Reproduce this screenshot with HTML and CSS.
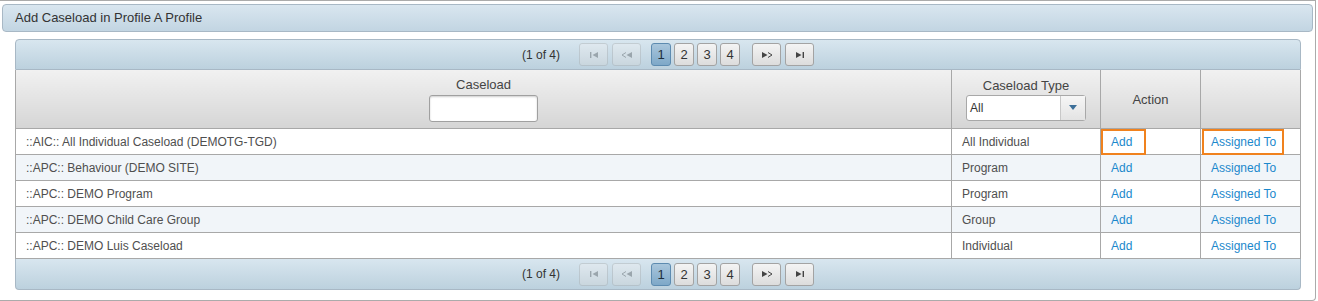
FILE: index.html
```html
<!DOCTYPE html>
<html lang="en">
<head>
    <meta charset="UTF-8">
    <meta name="viewport" content="width=device-width, initial-scale=1.0">
    <title>Add Caseload in Profile</title>
    <link rel="stylesheet" href="styles.css">
</head>
<body>

    <div class="panel">
        <div class="panel-title">Add Caseload in Profile A Profile</div>

        <div class="datatable">
            <div class="paginator paginator-top">
                <span class="page-info">(1 of 4)</span>
                <span class="pg-btn pg-icon disabled">
                    <svg width="10" height="6" viewBox="0 0 10 6"><rect x="1" y="0" width="1.4" height="6" fill="#444"/><path d="M9 0 L3.5 3 L9 6 Z" fill="#444"/></svg>
                </span>
                <span class="pg-btn pg-icon disabled">
                    <svg width="12" height="6" viewBox="0 0 12 6"><path d="M5 0.5 L1 3 L5 5.5" stroke="#444" stroke-width="1" fill="none"/><path d="M11 0 L5.5 3 L11 6 Z" fill="#444"/></svg>
                </span>
                <span class="pages">
                    <span class="pg-btn pg-num active">1</span>
                    <span class="pg-btn pg-num">2</span>
                    <span class="pg-btn pg-num">3</span>
                    <span class="pg-btn pg-num">4</span>
                </span>
                <span class="pg-btn pg-icon">
                    <svg width="12" height="6" viewBox="0 0 12 6"><path d="M1 0 L6.5 3 L1 6 Z" fill="#444"/><path d="M7 0.5 L11 3 L7 5.5" stroke="#444" stroke-width="1" fill="none"/></svg>
                </span>
                <span class="pg-btn pg-icon">
                    <svg width="10" height="6" viewBox="0 0 10 6"><path d="M1 0 L6.5 3 L1 6 Z" fill="#444"/><rect x="7.6" y="0" width="1.4" height="6" fill="#444"/></svg>
                </span>
            </div>

            <table class="grid">
                <colgroup>
                    <col>
                    <col class="col-type">
                    <col class="col-action">
                    <col class="col-assign">
                </colgroup>
                <thead>
                    <tr>
                        <th>
                            <div class="th-label">Caseload</div>
                            <input type="text" class="filter-input">
                        </th>
                        <th>
                            <div class="th-label">Caseload Type</div>
                            <div class="filter-select">
                                <span class="select-label">All</span>
                                <span class="select-trigger">
                                    <svg width="8" height="5" viewBox="0 0 8 5"><path d="M0 0 L8 0 L4 5 Z" fill="#3c6f99"/></svg>
                                </span>
                            </div>
                        </th>
                        <th>Action</th>
                        <th></th>
                    </tr>
                </thead>
                <tbody>
                    <tr>
                        <td>::AIC:: All Individual Caseload (DEMOTG-TGD)</td>
                        <td>All Individual</td>
                        <td class="marked"><a href="#">Add</a></td>
                        <td class="marked"><a href="#">Assigned To</a></td>
                    </tr>
                    <tr class="odd">
                        <td>::APC:: Behaviour (DEMO SITE)</td>
                        <td>Program</td>
                        <td><a href="#">Add</a></td>
                        <td><a href="#">Assigned To</a></td>
                    </tr>
                    <tr>
                        <td>::APC:: DEMO Program</td>
                        <td>Program</td>
                        <td><a href="#">Add</a></td>
                        <td><a href="#">Assigned To</a></td>
                    </tr>
                    <tr class="odd">
                        <td>::APC:: DEMO Child Care Group</td>
                        <td>Group</td>
                        <td><a href="#">Add</a></td>
                        <td><a href="#">Assigned To</a></td>
                    </tr>
                    <tr>
                        <td>::APC:: DEMO Luis Caseload</td>
                        <td>Individual</td>
                        <td><a href="#">Add</a></td>
                        <td><a href="#">Assigned To</a></td>
                    </tr>
                </tbody>
            </table>

            <div class="paginator paginator-bottom">
                <span class="page-info">(1 of 4)</span>
                <span class="pg-btn pg-icon disabled">
                    <svg width="10" height="6" viewBox="0 0 10 6"><rect x="1" y="0" width="1.4" height="6" fill="#444"/><path d="M9 0 L3.5 3 L9 6 Z" fill="#444"/></svg>
                </span>
                <span class="pg-btn pg-icon disabled">
                    <svg width="12" height="6" viewBox="0 0 12 6"><path d="M5 0.5 L1 3 L5 5.5" stroke="#444" stroke-width="1" fill="none"/><path d="M11 0 L5.5 3 L11 6 Z" fill="#444"/></svg>
                </span>
                <span class="pages">
                    <span class="pg-btn pg-num active">1</span>
                    <span class="pg-btn pg-num">2</span>
                    <span class="pg-btn pg-num">3</span>
                    <span class="pg-btn pg-num">4</span>
                </span>
                <span class="pg-btn pg-icon">
                    <svg width="12" height="6" viewBox="0 0 12 6"><path d="M1 0 L6.5 3 L1 6 Z" fill="#444"/><path d="M7 0.5 L11 3 L7 5.5" stroke="#444" stroke-width="1" fill="none"/></svg>
                </span>
                <span class="pg-btn pg-icon">
                    <svg width="10" height="6" viewBox="0 0 10 6"><path d="M1 0 L6.5 3 L1 6 Z" fill="#444"/><rect x="7.6" y="0" width="1.4" height="6" fill="#444"/></svg>
                </span>
            </div>
        </div>
    </div>

</body>
</html>
```

FILE: styles.css
```css
body{
    margin:0;
    font-family:"Liberation Sans", Arial, sans-serif;
    font-size:12px;
    color:#4f4f4f;
    background-color:#fff;
}

.panel{
    width:1316px;
    height:301px;
    border:1px solid #ababab;
    border-left:none;
    border-radius:0 0 4px 0;
    padding:3px 2px 0 2px;
    box-sizing:border-box;
}

.panel-title{
    height:28px;
    line-height:26px;
    box-sizing:border-box;
    border:1px solid #a8b8c5;
    border-radius:4px;
    background:linear-gradient(#d9e6ef, #c2d5e2);
    padding-left:12px;
    color:#333;
    font-size:13px;
}

.datatable{
    margin:7px 0 0 13px;
    width:1286px;
}

/* paginator bars */
.paginator{
    height:31px;
    box-sizing:border-box;
    border:1px solid #a8b8c5;
    background:linear-gradient(#d8e6ef, #bcd1de);
    display:flex;
    align-items:center;
    justify-content:center;
    padding-left:24px;
}

.paginator-top{
    border-radius:4px 4px 0 0;
}

.paginator-bottom{
    border-top:none;
    border-radius:0 0 4px 4px;
    height:31px;
}

.page-info{
    color:#333;
    margin-right:19px;
}

.pg-btn{
    display:inline-flex;
    align-items:center;
    justify-content:center;
    height:23px;
    box-sizing:border-box;
    border:1px solid #a3a3a3;
    border-radius:3px;
    background:linear-gradient(#f4f4f4, #dcdcdc);
    color:#333;
    font-size:13px;
}

.pg-icon{
    width:29px;
    margin-right:4px;
}

.pg-icon.disabled{
    opacity:0.35;
}

.pages{
    display:inline-flex;
    gap:3px;
    margin:0 12px 0 6px;
}

.pg-num{
    width:20px;
}

.pg-num.active{
    border-color:#5d8bb0;
    background:linear-gradient(#a9c6dc, #7ea8c8);
    color:#1e2e3c;
}

/* grid */
.grid{
    width:1286px;
    border-collapse:collapse;
    table-layout:fixed;
}

.col-type{ width:149px; }
.col-action{ width:100px; }
.col-assign{ width:100px; }

.grid th{
    height:58px;
    padding:0;
    border:1px solid #a8a8a8;
    border-top:none;
    background:linear-gradient(#f1f1f1, #d5d5d5);
    color:#444;
    font-weight:normal;
    font-size:13px;
    vertical-align:middle;
}

.th-label{
    margin-bottom:2px;
}

.filter-input{
    width:109px;
    height:27px;
    box-sizing:border-box;
    border:1px solid #a0a0a0;
    border-radius:3px;
    box-shadow:inset 0 1px 2px #cfcfcf;
    margin-top:1px;
}

.filter-select{
    display:flex;
    width:120px;
    height:26px;
    margin-left:14px;
    box-sizing:border-box;
    border:1px solid #a8a8a8;
    border-radius:3px;
    background-color:#fff;
    text-align:left;
}

.select-label{
    flex:1;
    font-size:12px;
    padding:5px 0 0 3px;
    color:#333;
}

.select-trigger{
    width:24px;
    border-left:1px solid #c8c8c8;
    background:linear-gradient(#f6f6f6, #e3e3e3);
    display:flex;
    align-items:center;
    justify-content:center;
}

.grid td{
    height:25px;
    padding:0 0 0 10px;
    border:1px solid #a8a8a8;
    white-space:nowrap;
}

.grid tr.odd td{
    background-color:#f1f5f9;
}

.grid a{
    color:#1b88cc;
    text-decoration:none;
}

.grid td.marked a{
    display:inline-block;
}

.grid td.marked:nth-child(3) a{
    outline:2px solid #f0821e;
    padding:4px 12px 4px 8px;
    margin-left:-8px;
}

.grid td.marked:nth-child(4) a{
    outline:2px solid #f0821e;
    padding:4px 6px 4px 7px;
    margin-left:-7px;
}
```
